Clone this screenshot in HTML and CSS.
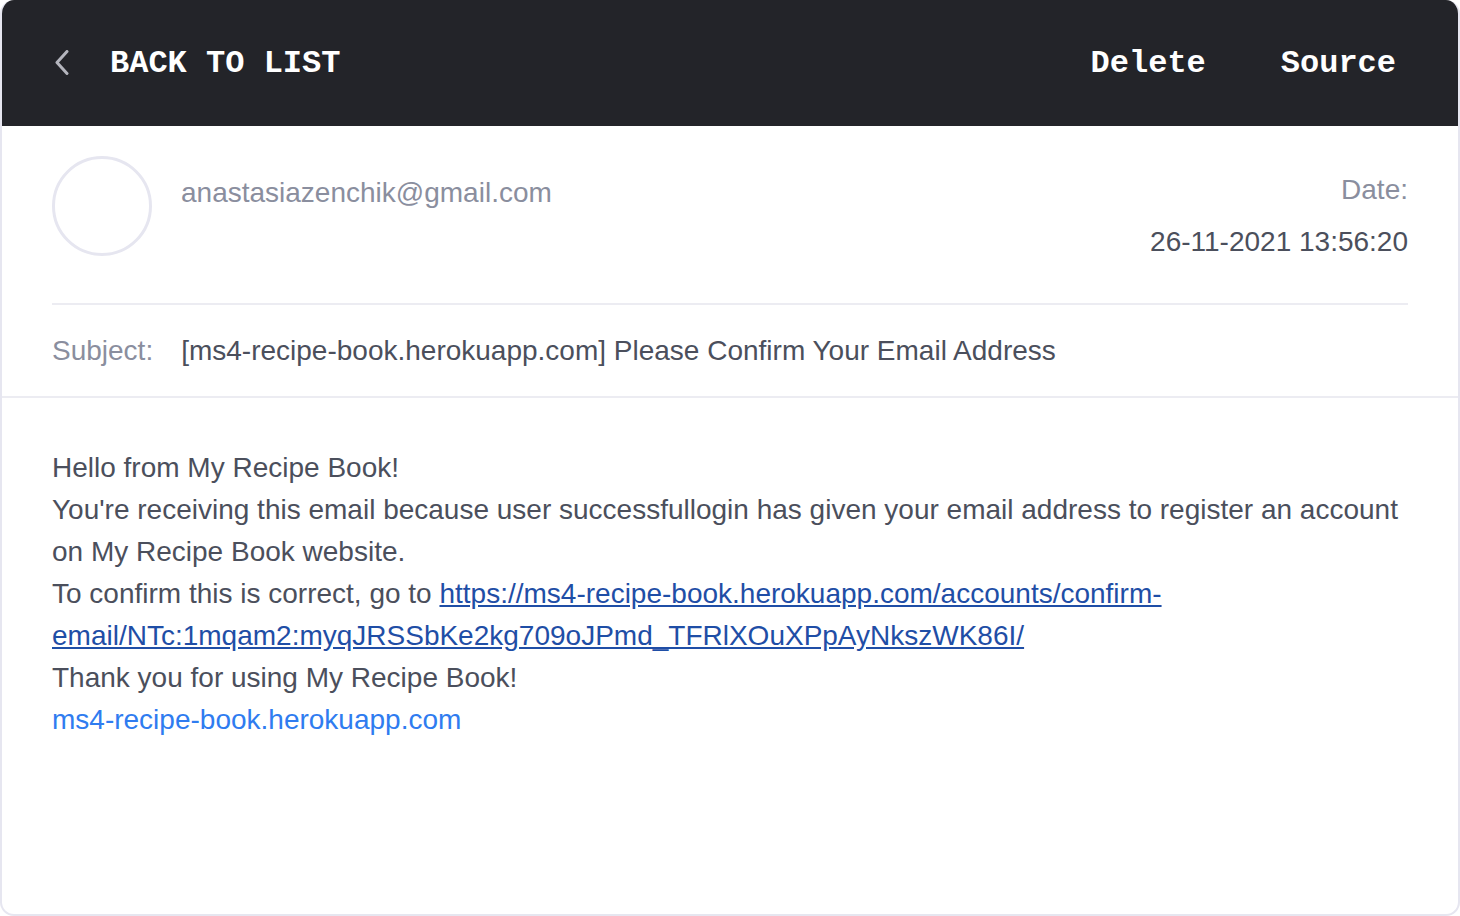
FILE: index.html
```html
<!DOCTYPE html>
<html>
<head>
<meta charset="utf-8">
<link rel="stylesheet" href="styles.css">
</head>
<body>
<div class="card">
  <header class="topbar">
    <a class="back">
      <svg class="chev" width="14" height="25" viewBox="0 0 14 25"><polyline points="12,1.5 2,12.5 12,23.5" fill="none" stroke="#b4b5bd" stroke-width="3" stroke-linecap="round" stroke-linejoin="round"/></svg>
      <span>BACK TO LIST</span>
    </a>
    <nav class="actions">
      <a>Delete</a>
      <a>Source</a>
    </nav>
  </header>
  <section class="meta">
    <div class="sender-row">
      <div class="avatar"></div>
      <div class="from">anastasiazenchik@gmail.com</div>
      <div class="date">
        <div class="date-label">Date:</div>
        <div class="date-value">26-11-2021 13:56:20</div>
      </div>
    </div>
    <div class="subject-row">
      <span class="subject-label">Subject:</span>
      <span class="subject-value">[ms4-recipe-book.herokuapp.com] Please Confirm Your Email Address</span>
    </div>
  </section>
  <section class="body">
    <p>Hello from My Recipe Book!<br>
    You're receiving this email because user successfullogin has given your email address to register an account on My Recipe Book website.<br>
    To confirm this is correct, go to <a class="link">https://ms4-recipe-book.herokuapp.com/accounts/confirm-email/NTc:1mqam2:myqJRSSbKe2kg709oJPmd_TFRlXOuXPpAyNkszWK86I/</a><br>
    Thank you for using My Recipe Book!<br>
    <a class="site">ms4-recipe-book.herokuapp.com</a></p>
  </section>
</div>
</body>
</html>
```

FILE: styles.css
```css
html, body {
  margin: 0;
  padding: 0;
  background: #ffffff;
}
body {
  font-family: "Liberation Sans", Arial, sans-serif;
}
.card {
  width: 1460px;
  height: 916px;
  box-sizing: border-box;
  border: 2px solid #e6e6f0;
  border-top: 0;
  border-radius: 14px;
  overflow: hidden;
  background: #fff;
}
.topbar {
  height: 126px;
  background: #232429;
  display: flex;
  align-items: center;
  justify-content: space-between;
  padding: 0 64px 0 55px;
  box-sizing: border-box;
  margin: 0 -2px;
  font-family: "Liberation Mono", "Courier New", monospace;
  font-weight: bold;
  font-size: 32px;
  color: #ffffff;
}
.back {
  display: flex;
  align-items: center;
  gap: 41px;
}
.chev {
  display: block;
  margin-top: -2px;
}
.actions {
  display: flex;
  gap: 75px;
}
.meta {
  padding: 30px 50px 0 50px;
  border-bottom: 2px solid #ececf2;
}
.sender-row {
  display: flex;
  align-items: flex-start;
  padding-bottom: 47px;
  border-bottom: 2px solid #ececf2;
}
.avatar {
  width: 100px;
  height: 100px;
  box-sizing: border-box;
  border: 3px solid #e6e6f0;
  border-radius: 50%;
  flex: none;
}
.from {
  margin-left: 29px;
  margin-top: 17px;
  font-size: 28px;
  line-height: 40px;
  color: #8a8e9e;
  flex: 1;
}
.date {
  margin-top: 8px;
  margin-bottom: -12px;
  text-align: right;
  font-size: 28px;
  line-height: 52px;
}
.date-label {
  color: #8a8e9e;
}
.date-value {
  color: #4b4f5c;
}
.subject-row {
  padding: 26px 0 25px;
  font-size: 28px;
  line-height: 40px;
  display: flex;
  gap: 28px;
}
.subject-label {
  color: #8a8e9e;
}
.subject-value {
  color: #4b4f5c;
}
.body {
  padding: 49px 50px 0 50px;
}
.body p {
  margin: 0;
  font-size: 28px;
  line-height: 42px;
  color: #4b4f5c;
}
.link {
  color: #1f4ea6;
  text-decoration: underline;
}
.site {
  color: #2f7cf0;
}
```
